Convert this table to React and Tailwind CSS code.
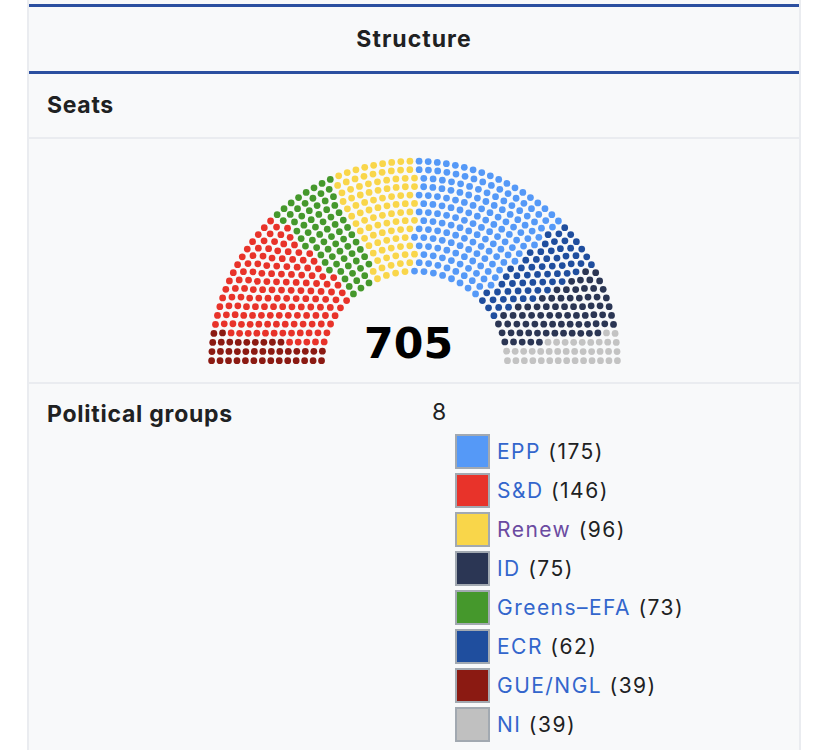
import React from "react";

const PARTIES = [
  { name: "GUE/NGL", seats: 39, color: "#8b1a12" },
  { name: "S&D", seats: 146, color: "#e8332a" },
  { name: "Greens–EFA", seats: 73, color: "#45982c" },
  { name: "Renew", seats: 96, color: "#f9d64a" },
  { name: "EPP", seats: 175, color: "#5599f7" },
  { name: "ECR", seats: 62, color: "#1f4e9e" },
  { name: "ID", seats: 75, color: "#2b3654" },
  { name: "NI", seats: 39, color: "#c3c3c3" },
];

const LEGEND = [
  { name: "EPP", seats: 175, color: "#5599f7", visited: false },
  { name: "S&D", seats: 146, color: "#e8332a", visited: false },
  { name: "Renew", seats: 96, color: "#f9d64a", visited: true },
  { name: "ID", seats: 75, color: "#2b3654", visited: false },
  { name: "Greens–EFA", seats: 73, color: "#45982c", visited: false },
  { name: "ECR", seats: 62, color: "#1f4e9e", visited: false },
  { name: "GUE/NGL", seats: 39, color: "#8b1a12", visited: false },
  { name: "NI", seats: 39, color: "#c0c0c0", visited: false },
];

function seatPositions(total) {
  const Totals = [3, 15, 33, 61, 95, 138, 189, 247, 313, 388, 469, 559, 657, 762, 876, 997];
  let rows = 1;
  for (let i = 0; i < Totals.length; i++) {
    if (Totals[i] >= total) {
      rows = i + 1;
      break;
    }
  }
  const radius = 0.4 / rows;
  const pos = [];
  for (let i = 1; i < rows; i++) {
    const J = Math.floor(
      (total / Totals[rows - 1]) * Math.PI / (2 * Math.asin(2 / (3 * rows + 4 * i - 2)))
    );
    const R = (3 * rows + 4 * i - 2) / (4 * rows);
    if (J === 1) {
      pos.push([Math.PI / 2, 1.75, R]);
    } else {
      for (let j = 0; j < J; j++) {
        const a = (j * (Math.PI - 2 * Math.sin(radius / R))) / (J - 1) + Math.sin(radius / R);
        pos.push([a, R * Math.cos(a) + 1.75, R * Math.sin(a)]);
      }
    }
  }
  const J = total - pos.length;
  const R = (7 * rows - 2) / (4 * rows);
  if (J === 1) {
    pos.push([Math.PI / 2, 1.75, R]);
  } else {
    for (let j = 0; j < J; j++) {
      const a = (j * (Math.PI - 2 * Math.sin(radius / R))) / (J - 1) + Math.sin(radius / R);
      pos.push([a, R * Math.cos(a) + 1.75, R * Math.sin(a)]);
    }
  }
  pos.sort((p, q) => q[0] - p[0] || q[1] - p[1] || q[2] - p[2]);
  return { pos, r: radius * 100 };
}

function Parliament() {
  const total = PARTIES.reduce((s, p) => s + p.seats, 0);
  const { pos, r } = seatPositions(total);
  const circles = [];
  let k = 0;
  PARTIES.forEach((p) => {
    for (let s = 0; s < p.seats; s++) {
      const q = pos[k++];
      circles.push(
        <circle
          key={k}
          cx={q[1] * 100 + 5}
          cy={100 * (1.75 - q[2]) + 5}
          r={r}
          fill={p.color}
        />
      );
    }
  });
  return (
    <svg width="427" height="219" viewBox="0 0 360 185">
      {circles}
      <text
        x="175"
        y="175"
        textAnchor="middle"
        fontSize="36"
        fontWeight="bold"
        fontFamily="'DejaVu Sans', sans-serif"
        fill="#000"
      >
        {total}
      </text>
    </svg>
  );
}

export default function App() {
  return (
    <div className="min-h-[750px] bg-white text-[#202122] font-['Inter','Noto_Sans',sans-serif]">
      <div className="ml-[27px] w-[774px] border-x-2 border-[#eaecf0] bg-[#f8f9fa] pt-[4px]">
        <div className="flex h-[67px] items-center justify-center border-t-[3px] border-[#2b4fa0] text-[23px] font-bold tracking-[0.045em]">
          Structure
        </div>
        <div className="flex h-[66px] items-center border-t-[3px] border-[#2b4fa0] px-[18px] text-[23px] font-bold tracking-[0.03em]">
          Seats
        </div>
        <div className="flex h-[245px] items-center justify-center border-t-2 border-[#eaecf0]">
          <Parliament />
        </div>
        <div className="flex border-t-2 border-[#eaecf0] px-[18px] pt-[13px] pb-[10px]">
          <div className="w-[385px] shrink-0 pt-[2px] text-[23px] leading-[30px] font-bold tracking-[0.033em]">
            Political groups
          </div>
          <div className="flex flex-col">
            <div className="text-[23px] leading-[30px]">8</div>
            <div className="ml-[23px] mt-[7px] flex flex-col gap-[4px]">
              {LEGEND.map((p) => (
                <div key={p.name} className="flex items-center gap-[7px]">
                  <span
                    className="block h-[35px] w-[35px] border-2 border-[#a2a9b1]"
                    style={{ backgroundColor: p.color }}
                  />
                  <span className="text-[21px] leading-[35px] tracking-[0.07em]">
                    <span className={p.visited ? "text-[#6b4ba1]" : "text-[#3366cc]"}>
                      {p.name}
                    </span>{" "}
                    ({p.seats})
                  </span>
                </div>
              ))}
            </div>
          </div>
        </div>
      </div>
    </div>
  );
}
